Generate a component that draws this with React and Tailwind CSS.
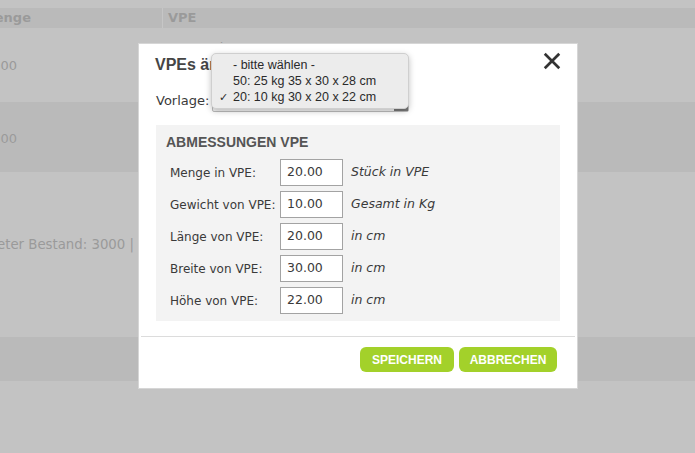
import { useState } from 'react'

const rows = [
  { label: 'Menge in VPE:', value: '20.00', unit: 'Stück in VPE' },
  { label: 'Gewicht von VPE:', value: '10.00', unit: 'Gesamt in Kg' },
  { label: 'Länge von VPE:', value: '20.00', unit: 'in cm' },
  { label: 'Breite von VPE:', value: '30.00', unit: 'in cm' },
  { label: 'Höhe von VPE:', value: '22.00', unit: 'in cm' },
]

const options = [
  { label: '- bitte wählen -', checked: false },
  { label: '50: 25 kg 35 x 30 x 28 cm', checked: false },
  { label: '20: 10 kg 30 x 20 x 22 cm', checked: true },
]

// cells whose text is cut at the page's left edge: right-aligned, clipped
function ClipLeft({ width, children, className = '' }) {
  return (
    <div className={`flex justify-end overflow-hidden whitespace-nowrap ${className}`} style={{ width }}>
      {children}
    </div>
  )
}

function BackgroundTable() {
  return (
    <div className="text-[13px] text-[#9a9a9a]">
      <div className="h-2 bg-[#c3c3c3]" />
      <div className="flex h-5 bg-[#bababa] font-bold leading-5">
        <div className="w-[163px] border-r border-[#c6c6c6]">
          <ClipLeft width={31}>Menge</ClipLeft>
        </div>
        <div className="flex-1 pl-[5px]">VPE</div>
      </div>
      <div className="flex h-[74px] bg-[#c3c3c3]">
        <div className="flex w-[163px] items-center pt-[2px]">
          <ClipLeft width={17}>3000</ClipLeft>
        </div>
        <div className="flex-1 pl-[9px] pt-[10px]">Menge in VPE: 50</div>
      </div>
      <div className="flex h-[70px] items-center bg-[#bababa] pt-[3px]">
        <ClipLeft width={17}>3000</ClipLeft>
      </div>
      <div className="flex h-[165px] items-center bg-[#c3c3c3] pb-[19px]">
        <ClipLeft width={134} className="text-[13.3px]">Berechneter Bestand: 3000 |</ClipLeft>
      </div>
      <div className="h-[44px] bg-[#bababa]" />
      <div className="h-[73px] bg-[#c3c3c3]" />
    </div>
  )
}

function Dropdown() {
  return (
    <div className="absolute left-[72px] top-[9px] z-10 w-[198px] rounded-[5px] border border-[#cfcfcf] bg-[#ececec] py-[3px] shadow-[0_2px_6px_rgba(0,0,0,0.25)] font-['Liberation_Sans',sans-serif] text-[12.5px] text-[#2a2a2a]">
      {options.map((option) => (
        <div key={option.label} className="flex h-4 items-center leading-4">
          <span className="w-[21px] pl-[7px] text-[11px]">{option.checked ? '✓' : ''}</span>
          <span>{option.label}</span>
        </div>
      ))}
    </div>
  )
}

function Modal() {
  const [values] = useState(rows)

  return (
    <div className="absolute left-[138px] top-[43px] h-[346px] w-[440px] border border-[#d6d6d6] bg-white font-['DejaVu_Sans',sans-serif] text-[#3a3a3a]">
      <div className="relative">
        <div className="flex items-start justify-between pl-[16px] pr-[16px] pt-[9px]">
          <h2 className="font-['Liberation_Sans',sans-serif] text-[16px] font-bold text-[#454545]">VPEs ändern</h2>
          <svg viewBox="0 0 20 20" className="-mt-[1px] h-[18px] w-[18px]">
            <path d="M3 3 L17 17 M17 3 L3 17" stroke="#333" strokeWidth="3" strokeLinecap="square" />
          </svg>
        </div>
        <div className="flex items-center pl-[17px] pt-[13px]">
          <span className="w-[56px] text-[13px]">Vorlage:</span>
          <div className="relative h-[22px] w-[197px] rounded-[2px] border border-[#bdbdbd] bg-[#f4f4f4]">
            <div className="absolute bottom-0 right-0 h-[4px] w-[14px] bg-[#7a7a7a]" />
          </div>
        </div>
        <Dropdown />
      </div>

      <div className="mx-[17px] mt-[13px] h-[196px] bg-[#f3f3f3] px-[10px] pt-[7px]">
        <h3 className="font-['Liberation_Sans',sans-serif] text-[14px] font-bold text-[#555]">ABMESSUNGEN VPE</h3>
        <div className="mt-[6px] flex flex-col gap-[5px] pl-[4px]">
          {values.map((row) => (
            <div key={row.label} className="flex items-center text-[12.5px]">
              <span className="w-[110px] whitespace-nowrap text-[12px]">{row.label}</span>
              <div className="flex h-[27px] w-[63px] items-center border border-[#a3a3a3] bg-white pl-[6px]">
                {row.value}
              </div>
              <span className="pl-[8px] italic">{row.unit}</span>
            </div>
          ))}
        </div>
      </div>

      <div className="mx-[2px] mt-[15px] border-t border-[#dcdcdc]" />

      <div className="flex justify-end gap-[5px] pr-[20px] pt-[10px] font-['Liberation_Sans',sans-serif]">
        <button className="h-[25px] w-[94px] rounded-[6px] bg-[#a3d12a] text-[12px] font-bold text-white">
          SPEICHERN
        </button>
        <button className="h-[25px] w-[98px] rounded-[6px] bg-[#a3d12a] text-[12px] font-bold text-white">
          ABBRECHEN
        </button>
      </div>
    </div>
  )
}

export default function App() {
  return (
    <div className="relative h-[453px] w-[695px] overflow-hidden bg-[#c3c3c3] font-['DejaVu_Sans',sans-serif]">
      <BackgroundTable />
      <Modal />
    </div>
  )
}
